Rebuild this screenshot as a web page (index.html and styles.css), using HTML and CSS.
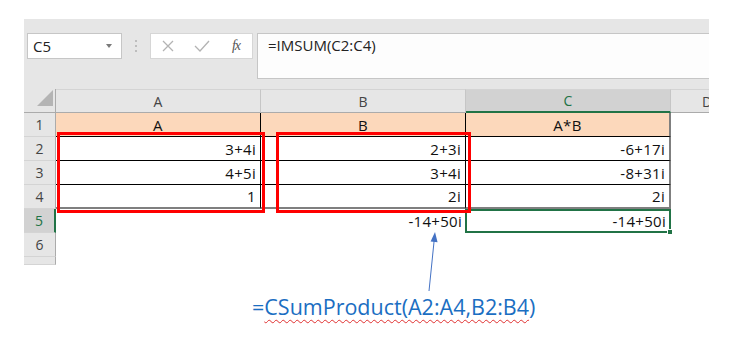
FILE: index.html
```html
<!DOCTYPE html>
<html lang="en">
<head>
    <meta charset="UTF-8">
    <meta name="viewport" content="width=device-width, initial-scale=1.0">
    <title>CSumProduct</title>
    <link rel="stylesheet" href="styles.css">
</head>
<body>
    <div class="page">
        <div class="excel">
            <div class="toolbar">
                <div class="namebox">
                    <span>C5</span>
                    <span class="drop"></span>
                </div>
                <div class="sep"><span></span><span></span><span></span></div>
                <div class="fbuttons">
                    <svg width="12" height="12" viewBox="0 0 12 12"><path d="M1 1 L11 11 M11 1 L1 11" stroke="#b3b3b3" stroke-width="1.3" fill="none"/></svg>
                    <svg width="16" height="12" viewBox="0 0 16 12"><path d="M1 6 L6 11 L15 1" stroke="#b3b3b3" stroke-width="1.3" fill="none"/></svg>
                    <span class="fx">fx</span>
                </div>
                <div class="formula">=IMSUM(C2:C4)</div>
            </div>

            <div class="sheet">
                <div class="corner"><span class="tri"></span></div>
                <div class="ch">A</div>
                <div class="ch">B</div>
                <div class="ch active">C</div>
                <div class="ch d">D</div>

                <div class="rh">1</div>
                <div class="cell head">A</div>
                <div class="cell head">B</div>
                <div class="cell head last-col">A*B</div>
                <div class="blank"></div>

                <div class="rh">2</div>
                <div class="cell">3+4i</div>
                <div class="cell">2+3i</div>
                <div class="cell last-col">-6+17i</div>
                <div class="blank"></div>

                <div class="rh">3</div>
                <div class="cell">4+5i</div>
                <div class="cell">3+4i</div>
                <div class="cell last-col">-8+31i</div>
                <div class="blank"></div>

                <div class="rh">4</div>
                <div class="cell last-row">1</div>
                <div class="cell last-row">2i</div>
                <div class="cell last-row last-col">2i</div>
                <div class="blank"></div>

                <div class="rh active">5</div>
                <div class="blank"></div>
                <div class="blank num">-14+50i</div>
                <div class="blank num selected">-14+50i<span class="handle"></span></div>
                <div class="blank"></div>

                <div class="rh">6</div>
                <div class="blank"></div>
                <div class="blank"></div>
                <div class="blank"></div>
                <div class="blank"></div>

                <div class="rh"></div>
                <div class="blank"></div>
                <div class="blank"></div>
                <div class="blank"></div>
                <div class="blank"></div>

                <!-- red boxes round the two input ranges -->
                <div class="mark mark-a"></div>
                <div class="mark mark-b"></div>
            </div>
        </div>

        <p class="note">=<span class="squiggle">CSumProduct(A2:A4,B2:B4</span>)</p>

        <svg class="arrow" width="24" height="66" viewBox="0 0 24 66">
            <line x1="9" y1="62" x2="14.1" y2="12" stroke="#4472c4" stroke-width="1"/>
            <polygon points="15,3 17.6,13.3 10.6,12.6" fill="#4472c4"/>
        </svg>
    </div>
</body>
</html>
```

FILE: styles.css
```css
* {
    margin: 0;
    padding: 0;
    box-sizing: border-box;
}
body {
    background: #fff;
    font-family: "Open Sans", "Noto Sans", Arial, sans-serif;
    color: #111;
}
.page {
    position: relative;
    width: 741px;
    height: 349px;
    padding: 19px 0 0 24px;
}
.excel {
    width: 685px;
    background: #e6e6e6;
}

/* formula bar */
.toolbar {
    height: 70px;
    display: flex;
    align-items: flex-start;
    padding: 14px 0 0 3px;
}
.namebox {
    width: 95px;
    height: 26px;
    background: #fff;
    border: 1px solid #c6c6c6;
    display: flex;
    align-items: center;
    justify-content: space-between;
    padding: 0 9px 0 5px;
    font-size: 15px;
    line-height: 20px;
    color: #222;
}
.drop {
    width: 0;
    height: 0;
    border-left: 3.5px solid transparent;
    border-right: 3.5px solid transparent;
    border-top: 4px solid #7a7a7a;
}
.sep {
    width: 28px;
    height: 26px;
    display: flex;
    flex-direction: column;
    align-items: center;
    justify-content: center;
    gap: 3px;
}
.sep span {
    width: 2px;
    height: 2px;
    background: #bdbdbd;
}
.fbuttons {
    width: 103px;
    height: 26px;
    background: #fff;
    border: 1px solid #d6d6d6;
    display: grid;
    grid-template-columns: 34px 34px 34px;
    align-items: center;
    justify-items: center;
}
.fx {
    font-family: "Liberation Serif", "DejaVu Serif", serif;
    font-style: italic;
    font-size: 14px;
    color: #555;
    letter-spacing: -1px;
}
.formula {
    flex: 1;
    height: 46px;
    margin-left: 4px;
    background: #fdfdfd;
    border: 1px solid #c6c6c6;
    border-right: none;
    padding: 1px 0 0 10px;
    font-size: 15px;
    line-height: 20px;
    color: #222;
}

/* grid */
.sheet {
    position: relative;
    display: grid;
    grid-template-columns: 32px 205px 205px 205px 38px;
    grid-template-rows: repeat(7, 24px) 8px;
    font-size: 15px;
    overflow: hidden;
}
.corner {
    border-right: 1px solid #ababab;
    border-bottom: 1px solid #ababab;
    display: flex;
    align-items: flex-end;
    justify-content: flex-end;
    padding: 0 2px 6px 0;
}
.tri {
    width: 16px;
    height: 16px;
    background: #b4b4b4;
    clip-path: polygon(100% 0, 100% 100%, 0 100%);
}
.ch {
    border-top: 1px solid #d4d4d4;
    border-right: 1px solid #c6c6c6;
    border-bottom: 1px solid #ababab;
    display: flex;
    align-items: center;
    justify-content: center;
    color: #444;
    font-size: 14px;
}
.ch.active {
    background: #d2d2d2;
    color: #217346;
    border-bottom: 2px solid #217346;
}
.ch.d {
    justify-content: flex-start;
    padding-left: 31px;
    border-right: none;
}
.rh {
    border-right: 1px solid #ababab;
    border-bottom: 1px solid #d4d4d4;
    display: flex;
    align-items: center;
    justify-content: center;
    color: #444;
    font-size: 14px;
}
.rh.active {
    background: #d2d2d2;
    color: #217346;
    border-right: 2px solid #217346;
}
.cell {
    background: #fff;
    border-right: 1px solid #000;
    border-bottom: 1px solid #000;
    display: flex;
    align-items: center;
    justify-content: flex-end;
    padding-right: 4px;
    letter-spacing: 0.3px;
}
.cell.head {
    background: #fcd8bb;
    justify-content: center;
    padding-right: 0;
}
.cell.last-col {
    border-right: 2px solid #7f7f7f;
}
.cell.last-row {
    border-bottom: 2px solid #7f7f7f;
}
.blank {
    background: #fff;
}
.num {
    display: flex;
    align-items: center;
    justify-content: flex-end;
    padding-right: 4px;
    letter-spacing: 0.3px;
}
.selected {
    position: relative;
    border: 2px solid #217346;
    margin-left: -1px;
    padding-right: 3px;
}
.handle {
    position: absolute;
    right: -4px;
    bottom: -4px;
    width: 6px;
    height: 6px;
    background: #217346;
    border: 1px solid #fff;
}
.mark {
    position: absolute;
    border: 3px solid #ff0000;
}
.mark-a {
    left: 33px;
    top: 43px;
    width: 208px;
    height: 81px;
}
.mark-b {
    left: 252px;
    top: 43px;
    width: 195px;
    height: 81px;
}

/* annotation */
.note {
    margin: 28px 0 0 228px;
    font-size: 21.5px;
    line-height: 28px;
    color: #1b6ec2;
}
.squiggle {
    text-decoration: underline wavy #e03030;
    text-decoration-thickness: 1px;
    text-underline-offset: 4px;
}
.arrow {
    position: absolute;
    left: 420px;
    top: 229px;
}
```
